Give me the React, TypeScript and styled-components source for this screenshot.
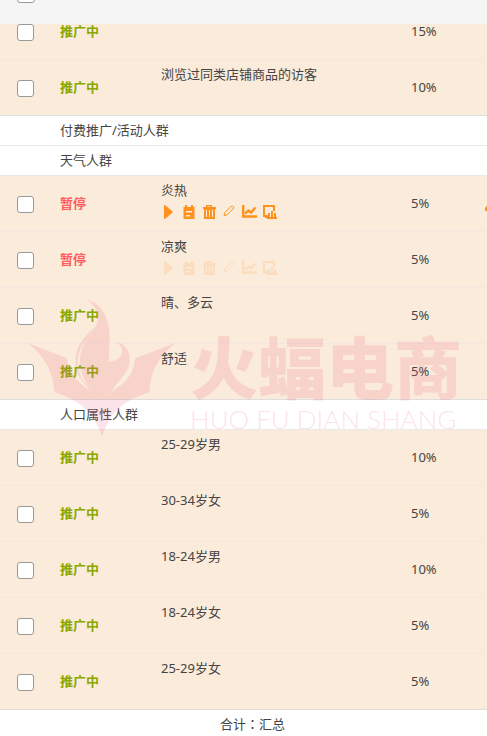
import React from "react";
import styled, { createGlobalStyle, css } from "styled-components";

const GlobalStyle = createGlobalStyle`
  body {
    margin: 0;
    background: #fff;
    color: #444;
    font: 13px/20px "Noto Sans", "Noto Sans CJK SC", sans-serif;
  }
`;

const Page = styled.main`
  position: relative;
  overflow: hidden;
`;

const Header = styled.header`
  position: relative;
  z-index: 1;
  display: flex;
  align-items: flex-start;
  height: 24px;
  padding-left: 17px;
  background: #f5f5f5;
`;

const Check = styled.input.attrs({ type: "checkbox" })<{ $header?: boolean }>`
  appearance: none;
  display: block;
  box-sizing: border-box;
  width: ${(p) => (p.$header ? 18 : 17)}px;
  height: 17px;
  margin: ${(p) => (p.$header ? "-14px 0 0" : "0 0 0 17px")};
  border: 1px solid #999;
  border-radius: 3px;
  background: #fff;
  &:checked {
    background: #ff8a1c;
  }
`;

const Table = styled.table`
  width: 100%;
  margin-top: -20px;
  table-layout: fixed;
  border-collapse: separate;
  border-spacing: 0;
`;

const Col = styled.col<{ $width?: number }>`
  width: ${(p) => (p.$width ? `${p.$width}px` : "auto")};
`;

const cell = css`
  box-sizing: border-box;
  padding: 0;
  text-align: left;
  font-weight: 400;
`;

const Cell = styled.td<{ $last?: boolean }>`
  ${cell}
  height: 56px;
  padding-bottom: 2px;
  border-bottom: 1px solid ${(p) => (p.$last ? "#dedede" : "#f2e8e0")};
  background: #fbebda;
  overflow: hidden;
`;

const CheckCell = styled(Cell)`
  padding: 2px 0 0;
`;

const NameCell = styled(Cell)`
  padding-top: 4px;
  vertical-align: top;
`;

const GroupCell = styled.th`
  ${cell}
  height: 30px;
  padding: 0 0 2px 60px;
  border-bottom: 1px solid #ebe9e8;
`;

const TotalCell = styled.td`
  ${cell}
  height: 28px;
  padding-left: 220px;
  font-family: "Noto Sans CJK TC", sans-serif;
`;

const Status = styled.span<{ $paused?: boolean }>`
  font-weight: 700;
  color: ${(p) => (p.$paused ? "#ff5c5c" : "#8aa800")};
`;

const Actions = styled.div<{ $faded?: boolean }>`
  display: flex;
  gap: 4px;
  margin-top: 4px;
  opacity: ${(p) => (p.$faded ? 0.15 : 1)};
`;

const IconButton = styled.button`
  display: block;
  flex: none;
  width: 16px;
  height: 16px;
  padding: 0;
  border: 0;
  background: none;
  color: #ff921e;
  svg {
    display: block;
  }
`;

const Bid = styled.div`
  display: flex;
  align-items: center;
  gap: 56px;
`;

const Watermark = styled.div`
  position: absolute;
  top: 299px;
  left: 27px;
  display: flex;
  gap: 14px;
  color: #ee6a88;
  opacity: 0.18;
  pointer-events: none;
  white-space: nowrap;
`;

const Brand = styled.div`
  padding-top: 28px;
`;

const BrandName = styled.div`
  font: 900 68px/76px "Noto Sans CJK SC", sans-serif;
`;

const BrandLatin = styled.div`
  font: 300 26px/32px Lato, sans-serif;
`;

const icons: { label: string; art: React.ReactNode }[] = [
  { label: "启动", art: <path d="M3 2Q3 1 4 1L12 8L4 15Q3 15 3 14Z" /> },
  {
    label: "计划",
    art: (
      <path
        fillRule="evenodd"
        d="M4 1h2v2h4V1h2v2h1.500v12H2.500V3H4ZM5 7v1.500h6V7ZM5 11v1.500h4V11Z"
      />
    ),
  },
  {
    label: "删除",
    art: (
      <path
        fillRule="evenodd"
        d="M5 3V1h6v2h4v2h-1v10H3V5H2V3ZM6.500 2.200V3h3v-.8ZM5 6v7h1V6ZM8 6v7h1V6ZM11 6v7h1V6Z"
      />
    ),
  },
  {
    label: "编辑",
    art: (
      <path
        fill="none"
        stroke="currentColor"
        strokeLinejoin="round"
        d="M3 11.500L3.800 8.500L10 2.500Q11.500 1.500 12.500 2.700Q13.300 4 12 5L6 10.800Z"
      />
    ),
  },
  {
    label: "趋势",
    art: (
      <path
        fill="none"
        stroke="currentColor"
        strokeWidth="2.400"
        d="M2.200 1V12.500H16M4 9.500L7.500 6.500L10 8.500L14.500 3.500"
      />
    ),
  },
  {
    label: "报表",
    art: (
      <>
        <path
          fill="none"
          stroke="currentColor"
          strokeWidth="2"
          d="M6 12H3V2H13V7"
        />
        <path d="M3 11h4v3H4ZM7 9h2v5H7ZM10 7h2v7h-2ZM13 9h2v5h-2ZM6 13h10v2H6Z" />
      </>
    ),
  },
];

function Icon({ children }: { children: React.ReactNode }) {
  return (
    <svg width="16" height="16" viewBox="0 0 16 16" fill="currentColor" aria-hidden="true">
      {children}
    </svg>
  );
}

function RowActions({ faded }: { faded: boolean }) {
  return (
    <Actions $faded={faded}>
      {icons.map((icon) => (
        <IconButton key={icon.label} type="button" aria-label={icon.label}>
          <Icon>{icon.art}</Icon>
        </IconButton>
      ))}
    </Actions>
  );
}

type Item = {
  name: string;
  bid: string;
  paused?: boolean;
  tools?: "on" | "faded";
};

const groups: { title?: string; items: Item[] }[] = [
  {
    items: [
      { name: "", bid: "15%" },
      { name: "浏览过同类店铺商品的访客", bid: "10%" },
    ],
  },
  { title: "付费推广/活动人群", items: [] },
  {
    title: "天气人群",
    items: [
      { name: "炎热", bid: "5%", paused: true, tools: "on" },
      { name: "凉爽", bid: "5%", paused: true, tools: "faded" },
      { name: "晴、多云", bid: "5%" },
      { name: "舒适", bid: "5%" },
    ],
  },
  {
    title: "人口属性人群",
    items: [
      { name: "25-29岁男", bid: "10%" },
      { name: "30-34岁女", bid: "5%" },
      { name: "18-24岁男", bid: "10%" },
      { name: "18-24岁女", bid: "5%" },
      { name: "25-29岁女", bid: "5%" },
    ],
  },
];

function AudienceRow({ item, last }: { item: Item; last: boolean }) {
  return (
    <tr>
      <CheckCell $last={last}>
        <Check aria-label={`选择 ${item.name}`} />
      </CheckCell>
      <Cell $last={last}>
        <Status $paused={item.paused}>{item.paused ? "暂停" : "推广中"}</Status>
      </Cell>
      <NameCell $last={last}>
        {item.name}
        {item.tools && <RowActions faded={item.tools === "faded"} />}
      </NameCell>
      <Cell $last={last}>
        <Bid>
          {item.bid}
          {item.tools === "on" && (
            <IconButton type="button" aria-label="修改溢价">
              <Icon>
                <path d="M0 16V13L10 2L13 5L3 16Z" />
              </Icon>
            </IconButton>
          )}
        </Bid>
      </Cell>
    </tr>
  );
}

function BrandMark() {
  return (
    <svg width="149" height="138" viewBox="22 28 447 414" fill="currentColor" aria-hidden="true">
      <path d="M24 160L142 206C147 244 166 270 190 288C207 299 217 304 215 315H277C275 304 287 298 302 288C326 270 342 244 347 206L467 160C421 196 392 240 389 308C340 323 294 348 270 388C260 407 251 425 247 441C242 425 233 407 224 388C198 348 154 323 104 308C101 240 70 196 24 160Z" />
      <path
        fillRule="evenodd"
        d="M203 30C247 42 269 86 270 138L267 216C290 216 306 203 307 187C308 174 301 165 291 158C320 162 331 188 330 213C329 257 281 277 275 316H216C215 293 177 278 169 235C161 172 194 143 219 119C245 95 240 56 203 30ZM237 94C236 126 196 147 190 195C186 232 194 262 206 290C184 270 173 246 174 211C178 160 222 138 237 94ZM237 94C220 134 184 160 181 205C180 240 189 262 206 290C194 262 186 232 190 195C196 147 236 126 237 94Z"
      />
    </svg>
  );
}

export default function App() {
  return (
    <>
      <GlobalStyle />
      <Page>
        <Header>
          <Check $header aria-label="全选" />
        </Header>
        <Table>
          <colgroup>
            <Col $width={60} />
            <Col $width={101} />
            <Col $width={250} />
            <Col />
          </colgroup>
          {groups.map((group, g) => (
            <tbody key={g}>
              {group.title && (
                <tr>
                  <GroupCell colSpan={4} scope="rowgroup">
                    {group.title}
                  </GroupCell>
                </tr>
              )}
              {group.items.map((item, i) => (
                <AudienceRow key={i} item={item} last={i === group.items.length - 1} />
              ))}
            </tbody>
          ))}
          <tfoot>
            <tr>
              <TotalCell colSpan={4}>合计：汇总</TotalCell>
            </tr>
          </tfoot>
        </Table>
        <Watermark>
          <BrandMark />
          <Brand>
            <BrandName>火蝠电商</BrandName>
            <BrandLatin>HUO FU DIAN SHANG</BrandLatin>
          </Brand>
        </Watermark>
      </Page>
    </>
  );
}
